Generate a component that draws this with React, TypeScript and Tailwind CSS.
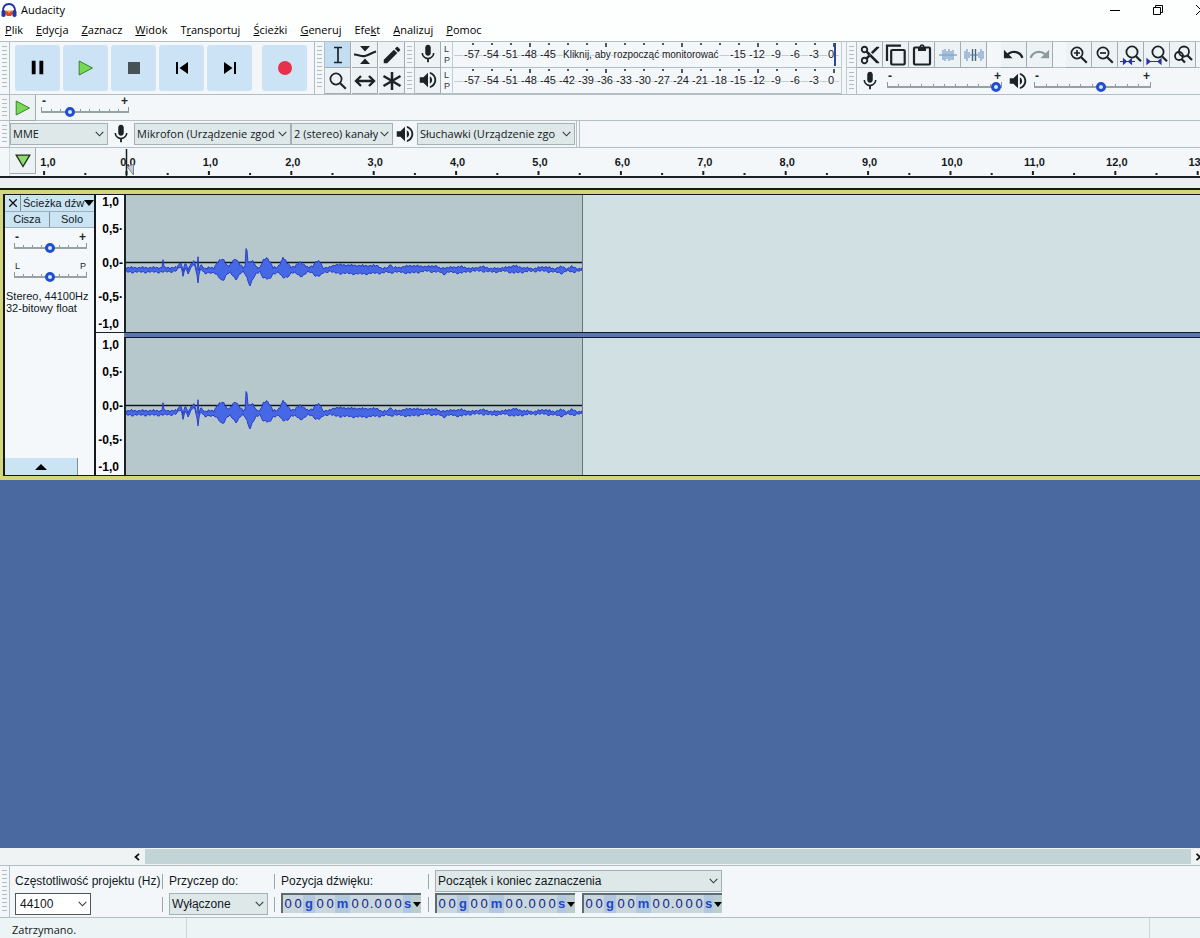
import { ReactNode } from 'react';
import {
  MdContentCut,
  MdEdit,
  MdMic,
  MdPause,
  MdSkipNext,
  MdSkipPrevious,
  MdUndo,
  MdRedo,
  MdVolumeUp,
} from 'react-icons/md';

const MENU = ['Plik', 'Edycja', 'Zaznacz', 'Widok', 'Transportuj', 'Ścieżki', 'Generuj', 'Efekt', 'Analizuj', 'Pomoc'];

// index of the underlined access key in every menu title
const ACCESS_KEY: Record<string, number> = { Transportuj: 1, Efekt: 3 };

function Gripper() {
  return (
    <div className="flex w-[10px] shrink-0 self-stretch border-r border-[#b4bfc3] py-1 pl-[2px]">
      <div className="w-[5px] bg-[repeating-linear-gradient(to_bottom,#b3bcbf_0_1px,transparent_1px_4px)]" />
    </div>
  );
}

function ToolButton({ label, active, children }: { label: string; active?: boolean; children: ReactNode }) {
  return (
    <button
      aria-label={label}
      className={`flex h-[26px] w-[26px] shrink-0 items-center justify-center border-r border-b border-[#a3adb1] text-[#1c2326] ${
        active ? 'bg-[#c3def0]' : 'bg-[#edf3f5]'
      }`}
    >
      {children}
    </button>
  );
}

function TransportButton({ label, children }: { label: string; children: ReactNode }) {
  return (
    <button
      aria-label={label}
      className="flex h-[46px] w-[45px] items-center justify-center rounded-[3px] bg-[#cbe3f5] text-black"
    >
      {children}
    </button>
  );
}

function Slider({
  label,
  value,
  ticks,
  low = '-',
  high = '+',
  className,
}: {
  label: string;
  value: number;
  ticks: number;
  low?: string;
  high?: string;
  className: string;
}) {
  return (
    <div className={`shrink-0 ${className}`}>
      <div
        className={`flex h-3 justify-between px-px leading-3 text-[#20282b] ${
          low === '-' ? 'text-[12px] font-bold' : 'text-[9px]'
        }`}
      >
        <span>{low}</span>
        <span>{high}</span>
      </div>
      <div className="grid h-[10px] items-center">
        <div className="flex h-[6px] justify-between self-start border-b-2 border-[#98a2a5] [grid-area:1/1]">
          {Array.from({ length: ticks }, (_, i) => (
            <span
              key={i}
              className={`w-px bg-[#8d979a] ${i === 0 || i === ticks - 1 ? 'h-[4px]' : 'mt-[2px] h-[2px]'}`}
            />
          ))}
        </div>
        <input
          type="range"
          aria-label={label}
          defaultValue={value}
          className="h-[10px] w-full appearance-none bg-transparent [grid-area:1/1] [&::-webkit-slider-thumb]:h-[10px] [&::-webkit-slider-thumb]:w-[10px] [&::-webkit-slider-thumb]:appearance-none [&::-webkit-slider-thumb]:rounded-full [&::-webkit-slider-thumb]:border-[3px] [&::-webkit-slider-thumb]:border-[#1f4fd0] [&::-webkit-slider-thumb]:bg-[#d8e6ff]"
        />
      </div>
    </div>
  );
}

function Select({ label, id, value, className }: { label?: string; id?: string; value: string; className: string }) {
  return (
    <div className={`grid h-[22px] shrink-0 items-center border ${className}`}>
      <select
        id={id}
        aria-label={label}
        className="h-full w-full min-w-0 appearance-none bg-transparent pr-[14px] pl-[2px] [grid-area:1/1]"
      >
        <option>{value}</option>
      </select>
      <svg className="pointer-events-none mr-[3px] h-[6px] w-[9px] justify-self-end [grid-area:1/1]" viewBox="0 0 9 6">
        <path d="M.7.9 4.5 4.8 8.3.9" fill="none" stroke="#30383b" strokeWidth="1.1" />
      </svg>
    </div>
  );
}

const METER = Array.from({ length: 20 }, (_, i) => -57 + i * 3);

function Meter({ label, hint, children }: { label: string; hint?: string; children: ReactNode }) {
  return (
    <div className="flex h-[26px] items-center border-b border-[#b4bfc3]">
      <Gripper />
      <ToolButton label={label}>{children}</ToolButton>
      <div className="w-[11px] pl-[3px] text-[9px] leading-[11px] text-[#303a3e]">
        <div>L</div>
        <div>P</div>
      </div>
      <svg className="h-[26px] w-[389px] border-l border-[#c3cdd0]">
        <path d="M1 13.5H386" stroke="#c3cdd0" />
        {METER.map((db, i) => (
          <path key={db} d={`M${20 + i * 19} 1v${i % 4 === 3 ? 4 : 2}`} stroke="#1a2023" strokeWidth="1.5" />
        ))}
        {METER.filter((db) => !hint || db < -42 || db > -18).map((db) => (
          <text
            key={db}
            x={db === 0 ? 378 : 19 + ((db + 57) / 3) * 19}
            y="16"
            textAnchor="middle"
            className="fill-[#1a2023] stroke-[#f4f7fa] stroke-2 text-[11px] [paint-order:stroke]"
          >
            {db}
          </text>
        ))}
        {hint && (
          <text x="110" y="16" className="fill-[#1a2023] stroke-[#f4f7fa] stroke-2 text-[10px] [paint-order:stroke]">
            {hint}
          </text>
        )}
        {hint && <path d="M382 1v23" stroke="#2b4795" strokeWidth="2" />}
      </svg>
    </div>
  );
}

function Loupe({ children }: { children?: ReactNode }) {
  return (
    <svg viewBox="0 0 20 20" className="h-5 w-5" fill="none" stroke="currentColor" strokeWidth="1.7">
      <circle cx="8" cy="8" r="5.6" />
      <path d="m12.2 12.2 5.6 5.6" strokeWidth="2.2" />
      {children}
    </svg>
  );
}

// loupe raised a little to leave room for the blue arrows
function FitLoupe({ children }: { children: ReactNode }) {
  return (
    <svg viewBox="0 0 22 22" className="h-[22px] w-[22px]" fill="none" stroke="currentColor" strokeWidth="1.8">
      <circle cx="12" cy="8" r="5.6" />
      <path d="m16 12.200 5 5" strokeWidth="2.200" />
      <g stroke="#2a2fae" fill="#2a2fae" strokeWidth="1.200">
        {children}
      </g>
    </svg>
  );
}

function Wave({ gap }: { gap?: boolean }) {
  return (
    <svg viewBox="0 0 20 20" className="h-5 w-5" stroke="#86a8cf" strokeWidth="1.4">
      {gap ? (
        <path d="M1 6v8M3 4v12M5 7v6M15 7v6M17 4v12M19 6v8M6 10h8" />
      ) : (
        <path d="M1 10h18M5 5v10M7 4v12M9 6v8M11 4v12M13 6v9M15 5v10" />
      )}
      {gap && <path d="M8.5 4v12M11.5 4v12" stroke="#47667f" />}
    </svg>
  );
}

function Toolbars() {
  return (
    <div className="flex h-[54px] border-t border-b border-[#b4bfc3]">
      <Gripper />
      <div className="flex w-[304px] shrink-0 items-center gap-[3px] pb-px pl-[5px]">
        <TransportButton label="Pauza">
          <MdPause size={23} />
        </TransportButton>
        <TransportButton label="Odtwórz">
          <svg viewBox="0 0 16 16" className="h-4 w-4">
            <path d="M1.2 1 14.5 8 1.2 15z" fill="#74dc52" stroke="#3f7d38" />
          </svg>
        </TransportButton>
        <TransportButton label="Zatrzymaj">
          <span className="h-3 w-3 bg-[#465256]" />
        </TransportButton>
        <TransportButton label="Do początku">
          <MdSkipPrevious size={24} />
        </TransportButton>
        <TransportButton label="Do końca">
          <MdSkipNext size={24} />
        </TransportButton>
        <div className="ml-[7px]">
          <TransportButton label="Nagraj">
            <span className="h-[14px] w-[14px] rounded-full bg-[#e8304c]" />
          </TransportButton>
        </div>
      </div>
      <div className="w-px bg-[#b4bfc3]" />
      <Gripper />
      <div className="grid shrink-0 grid-cols-3 gap-x-px">
        <ToolButton label="Zaznaczanie" active>
          <svg viewBox="0 0 16 18" className="h-[18px] w-4" fill="none" stroke="currentColor" strokeWidth="1.7">
            <path d="M4 1.5h8M4 16.5h8M8 1.5v15" />
          </svg>
        </ToolButton>
        <ToolButton label="Obwiednia">
          <svg viewBox="0 0 24 20" className="h-5 w-6" fill="currentColor">
            <path d="M7 1h10l-5 5.5zM7 19h10l-5-5.500z" />
            <path d="M1 9.500c5 0 7 2.500 11 1.500s6-3 11-4.500" fill="none" stroke="currentColor" strokeWidth="2.200" />
          </svg>
        </ToolButton>
        <ToolButton label="Rysowanie">
          <MdEdit size={22} />
        </ToolButton>
        <ToolButton label="Powiększenie">
          <Loupe />
        </ToolButton>
        <ToolButton label="Przesunięcie w czasie">
          <svg viewBox="0 0 22 16" className="h-4 w-[22px]" fill="none" stroke="currentColor" strokeWidth="2.4">
            <path d="M2 8h18M7 3 2 8l5 5M15 3l5 5-5 5" />
          </svg>
        </ToolButton>
        <ToolButton label="Multinarzędzie">
          <svg viewBox="0 0 20 20" className="h-5 w-5" stroke="currentColor" strokeWidth="2.5">
            <path d="M10 1v18M1.500 5l17 10M18.500 5l-17 10" />
          </svg>
        </ToolButton>
      </div>
      <div className="shrink-0">
        <Meter label="Poziom nagrywania" hint="Kliknij, aby rozpocząć monitorować">
          <MdMic size={22} />
        </Meter>
        <Meter label="Poziom odtwarzania">
          <MdVolumeUp size={22} />
        </Meter>
      </div>
      <div className="w-[6px] shrink-0 border-x border-[#c3cdd0]" />
      <div className="min-w-0 flex-1 overflow-hidden">
        <div className="flex h-[26px] border-b border-[#b4bfc3]">
          <Gripper />
          <ToolButton label="Wytnij">
            <MdContentCut size={22} />
          </ToolButton>
          <ToolButton label="Kopiuj">
            <svg viewBox="0 0 22 22" className="h-[22px] w-[22px]" fill="none" stroke="currentColor" strokeWidth="2.200">
              <path d="M2 17V1.600h14" />
              <rect x="6.200" y="6" width="13.500" height="14.500" rx="1" />
            </svg>
          </ToolButton>
          <ToolButton label="Wklej">
            <svg viewBox="0 0 22 22" className="h-[22px] w-[22px]" fill="none" stroke="currentColor" strokeWidth="2.200">
              <rect x="3" y="3.500" width="16" height="17" rx="1" />
              <path d="M7 3h8v4H7z" fill="currentColor" stroke="none" />
              <circle cx="11" cy="2.800" r="1.800" strokeWidth="1.400" />
            </svg>
          </ToolButton>
          <ToolButton label="Przytnij">
            <Wave />
          </ToolButton>
          <ToolButton label="Wycisz">
            <Wave gap />
          </ToolButton>
          <div className="w-[14px] shrink-0" />
          <ToolButton label="Cofnij">
            <MdUndo size={23} />
          </ToolButton>
          <ToolButton label="Ponów">
            <MdRedo size={23} className="text-[#8b9a9e]" />
          </ToolButton>
          <div className="w-[13px] shrink-0" />
          <ToolButton label="Powiększ">
            <Loupe>
              <path d="M8 5v6M5 8h6" />
            </Loupe>
          </ToolButton>
          <ToolButton label="Pomniejsz">
            <Loupe>
              <path d="M5 8h6" />
            </Loupe>
          </ToolButton>
          <ToolButton label="Dopasuj zaznaczenie">
            <FitLoupe>
              <path d="M0 17.500h15M3.500 15v5l3-2.500zM11.500 15v5l-3-2.500z" />
            </FitLoupe>
          </ToolButton>
          <ToolButton label="Dopasuj projekt">
            <FitLoupe>
              <path d="M1 17.500h14M1 15v5l3-2.500zM15 15v5l-3-2.500z" />
            </FitLoupe>
          </ToolButton>
          <ToolButton label="Przełącz powiększenie">
            <svg viewBox="0 0 20 20" className="h-5 w-5" fill="none" stroke="currentColor" strokeWidth="1.8">
              <circle cx="6" cy="11" r="4" />
              <circle cx="11" cy="6.500" r="5" />
              <path d="m8.500 14 3.500 3.500M14.500 10.500l4.500 4.500" strokeWidth="2.200" />
            </svg>
          </ToolButton>
        </div>
        <div className="flex h-[26px] items-center">
          <Gripper />
          <MdMic size={22} className="mx-[2px] shrink-0 text-[#1c2326]" />
          <Slider label="Głośność nagrywania" value={99} ticks={11} className="ml-1 w-[115px]" />
          <MdVolumeUp size={22} className="mx-[5px] shrink-0 text-[#1c2326]" />
          <Slider label="Głośność odtwarzania" value={58} ticks={11} className="w-[117px]" />
        </div>
      </div>
    </div>
  );
}

const SECOND = 82.4;

function Ruler() {
  return (
    <div className="flex h-[30px] border-b-2 border-[#1c2226]">
      <div className="w-[10px] shrink-0 border-r border-[#d3dadd]" />
      <ToolButton label="Przypnij głowicę">
        <svg viewBox="0 0 16 14" className="h-[14px] w-4">
          <path d="M1.200 1.200h13.600L8 12.500z" fill="#8fdc6c" stroke="#1f2b1d" strokeWidth="1.3" />
        </svg>
      </ToolButton>
      <svg className="h-[28px] min-w-0 flex-1">
        {Array.from({ length: 29 }, (_, i) => {
          const x = 90.5 + ((i - 2) * SECOND) / 2;
          return <path key={i} d={`M${x} 27v${i % 2 ? -2 : -4}`} stroke="#1a2023" strokeWidth="2" />;
        })}
        {Array.from({ length: 15 }, (_, i) => (
          <text
            key={i}
            x={i === 0 ? 12 : 92 + (i - 1) * SECOND}
            y="18"
            textAnchor="middle"
            className="fill-[#141a1d] text-[11px] font-bold"
          >
            {Math.abs(i - 1)},0
          </text>
        ))}
        <path d="M90.500 1v27" stroke="#1a2023" strokeWidth="1.5" />
        <path d="M97.500 16v11l-6-8z" fill="#c4cccf" stroke="#7d878a" />
      </svg>
    </div>
  );
}

// [x, height above the centre, depth below it]
const ENVELOPE = [
  [0, 2, 2], [36, 2, 2], [37, 11, 2], [38, 2, 2], [50, 2, 1], [53, 5, -2], [55, 8, -3], [57, -2, 6], [59, 7, -3],
  [62, 0, 4], [65, 6, -2], [68, 9, -6], [71, -1, 4], [72, 12, 12], [73, 0, 4], [75, 5, -1], [79, 1, 4], [84, 2, 2],
  [88, 2, 3], [91, 7, 5], [95, 10, 10], [98, 10, 9], [101, 4, 4], [104, 4, 3], [107, 9, 6], [110, 11, 9],
  [114, 5, 4], [117, 2, 2], [119, 3, 4], [120, 21, 6], [121, 21, 8], [122, 7, 11], [124, 8, 15], [127, 8, 9],
  [130, 3, 4], [134, 2, 2], [137, 9, 7], [141, 12, 9], [144, 8, 9], [147, 2, 4], [151, 2, 2], [154, 6, 4],
  [157, 12, 8], [161, 7, 7], [165, 3, 3], [169, 3, 3], [174, 8, 6], [178, 5, 5], [182, 2, 2], [187, 4, 3],
  [190, 8, 6], [194, 8, 6], [197, 2, 3], [203, 2, 1], [209, 5, 3], [236, 4, 4], [252, 4, 3], [256, 1, 3],
  [262, 2, 2], [264, 6, 3], [267, 2, 2], [272, 2, 2], [284, 4, 3], [302, 3, 1], [310, 4, 2], [314, 1, 2],
  [318, 2, 4], [322, 2, 2], [335, 3, 3], [345, 1, 1], [356, 3, 1], [366, 1, 2], [380, 2, 1], [388, 4, 3],
  [396, 2, 2], [408, 1, 1], [418, 3, 1], [428, 1, 2], [436, 3, 3], [441, 1, 1], [446, 3, 2], [452, 1, 1], [456, 1, 1],
];

function wavePath() {
  const top: string[] = [];
  const bottom: string[] = [];
  let k = 0;
  for (let x = 0; x <= 456; x++) {
    while (k < ENVELOPE.length - 2 && ENVELOPE[k + 1][0] < x) k++;
    const [x0, u0, d0] = ENVELOPE[k];
    const [x1, u1, d1] = ENVELOPE[k + 1];
    const t = (x - x0) / (x1 - x0);
    const up = u0 + (u1 - u0) * t + ((x * x * 7) % 11) * 0.25 - 1.2;
    const down = d0 + (d1 - d0) * t + ((x * x * 5) % 13) * 0.2 - 1.2;
    top.push(`${x} ${(75 - up).toFixed(1)}`);
    bottom.unshift(`${x} ${(75 + down).toFixed(1)}`);
  }
  return `M${top.join('L')}L${bottom.join('L')}Z`;
}

const WAVE = wavePath();

function Channel() {
  return (
    <div className="flex h-[137px]">
      <div className="flex w-[30px] shrink-0 flex-col border-r-2 border-[#1c2226] bg-[#f7fafc] text-right text-[12px] leading-[14px] font-bold">
        <div className="pr-[5px]">1,0</div>
        <div className="mt-[13px] pr-px">0,5·</div>
        <div className="mt-5 pr-px">0,0-</div>
        <div className="mt-5 pr-px">-0,5·</div>
        <div className="mt-auto pr-[5px] pb-px">-1,0</div>
      </div>
      <div className="flex min-w-0 flex-1 bg-[#d0e0e3]">
        <svg className="h-[137px] w-[457px] shrink-0 border-r border-[#65757a] bg-[#b6c8cb]">
          <path d="M0 67.500h457" stroke="#111619" strokeWidth="1.5" />
          <path d={WAVE} fill="#4668e4" stroke="#2439c4" strokeWidth=".9" />
        </svg>
      </div>
    </div>
  );
}

function Track() {
  return (
    <div className="border-y-4 border-l-[3px] border-[#d3d67c]">
      <div className="flex border-y-[1px] border-l-2 border-[#14191c]">
        <div className="flex w-[91px] shrink-0 flex-col border-r-2 border-[#14191c] bg-[#f5f8fb] text-[11px] text-[#11181b]">
          <div className="flex h-[17px] border-b border-[#9bb0ba] bg-[#cae4f3]">
            <button aria-label="Zamknij ścieżkę" className="flex w-4 items-center justify-center border-r border-[#7d9099]">
              <svg viewBox="0 0 8 8" className="h-2 w-2" stroke="#111" strokeWidth="1.3">
                <path d="m0 0 8 8M8 0 0 8" />
              </svg>
            </button>
            <button className="flex min-w-0 flex-1 items-center pl-[2px]">
              <span className="whitespace-nowrap">Ścieżka dźw</span>
              <svg viewBox="0 0 10 6" className="h-[6px] w-[10px] shrink-0">
                <path d="M0 0h10L5 6z" />
              </svg>
            </button>
          </div>
          <div className="flex h-4 border-b border-[#9bb0ba] bg-[#cae4f3] leading-[15px]">
            <button className="flex-1 border-r border-[#7d9099]">Cisza</button>
            <button className="flex-1">Solo</button>
          </div>
          <Slider label="Wzmocnienie" value={49} ticks={9} className="mt-[3px] ml-[9px] w-[73px]" />
          <Slider label="Panorama" value={49} ticks={9} low="L" high="P" className="mt-[7px] ml-[9px] w-[73px]" />
          <div className="mt-2 pl-px leading-[12px]">
            <div className="whitespace-nowrap">Stereo, 44100Hz</div>
            <div>32-bitowy float</div>
          </div>
          <button
            aria-label="Zwiń"
            className="mt-auto flex h-[17px] w-[73px] items-center justify-center border-r border-[#7d9099] bg-[#cae4f3]"
          >
            <svg viewBox="0 0 12 6" className="h-[6px] w-3">
              <path d="M0 6h12L6 0z" />
            </svg>
          </button>
        </div>
        <div className="min-w-0 flex-1">
          <Channel />
          <div className="flex">
            <div className="w-[28px] shrink-0 border-t border-[#1c2226] bg-[#f7fafc]" />
            <div className="h-[6px] flex-1 border-y border-[#111a2e] bg-[#5a74ac]" />
          </div>
          <Channel />
        </div>
      </div>
    </div>
  );
}

// width class and content of every cell in a time field
const TIME_CELLS = [
  ['w-[10px]', '0'],
  ['w-[10px]', '0'],
  ['w-[12px]', 'g'],
  ['w-[10px]', '0'],
  ['w-[10px]', '0'],
  ['w-[15px]', 'm'],
  ['w-[10px]', '0'],
  ['w-[10px]', '0'],
  ['w-[3px]', '.'],
  ['w-[10px]', '0'],
  ['w-[10px]', '0'],
  ['w-[10px]', '0'],
  ['w-[9px]', 's'],
];

function TimeField({ label }: { label: string }) {
  return (
    <div
      role="group"
      aria-label={label}
      className="flex h-5 w-[140px] border-t-2 border-l-2 border-[#5c6c70] bg-[#cad7dc] text-[13px] leading-[18px] text-[#101d8c]"
    >
      {TIME_CELLS.map(([width, char], i) => (
        <span
          key={i}
          className={`flex shrink-0 justify-center ${width} ${
            /[gms]/.test(char) ? 'bg-[#b2c8dc] font-bold text-[#2446c4]' : ''
          }`}
        >
          {char}
        </span>
      ))}
      <button aria-label={`Format: ${label}`} className="flex min-w-0 flex-1 items-center justify-center bg-[#bccdd0]">
        <svg viewBox="0 0 8 5" className="h-[5px] w-2">
          <path d="M0 0h8L4 5z" />
        </svg>
      </button>
    </div>
  );
}

function Divider() {
  return (
    <div className="flex w-[13px] shrink-0 flex-col items-center gap-2 pt-1">
      <div className="h-[15px] w-px bg-[#9aa6a9]" />
      <div className="h-[15px] w-px bg-[#9aa6a9]" />
    </div>
  );
}

function SelectionBar() {
  return (
    <div className="flex h-[53px] border-t border-b border-[#b4bfc3] text-[12px] text-[#12191c]">
      <Gripper />
      <div className="flex pt-1 pl-[5px]">
        <div className="w-[141px]">
          <label htmlFor="rate" className="block h-[23px] leading-[23px] whitespace-nowrap">
            Częstotliwość projektu (Hz)
          </label>
          <Select id="rate" value="44100" className="w-[76px] border-[#4e585b] bg-white pl-[2px]" />
        </div>
        <Divider />
        <div className="w-[99px]">
          <label htmlFor="snap" className="block h-[23px] leading-[23px]">
            Przyczep do:
          </label>
          <Select id="snap" value="Wyłączone" className="w-[99px] border-[#a4b1b4] bg-[#dfe8e9]" />
        </div>
        <Divider />
        <div className="w-[141px]">
          <div className="h-[23px] leading-[23px]">Pozycja dźwięku:</div>
          <TimeField label="Pozycja dźwięku" />
        </div>
        <Divider />
        <div className="w-[287px]">
          <Select
            label="Tryb zaznaczenia"
            value="Początek i koniec zaznaczenia"
            className="mb-px border-[#a4b1b4] bg-[#dfe8e9]"
          />
          <div className="flex justify-between">
            <TimeField label="Początek zaznaczenia" />
            <TimeField label="Koniec zaznaczenia" />
          </div>
        </div>
      </div>
    </div>
  );
}

export default function App() {
  return (
    <div className="flex min-h-screen flex-col overflow-hidden bg-[#f4f7fa] font-['Liberation_Sans',Arial,sans-serif] text-black">
      <header className="bg-[#fdfffe] font-['Open_Sans','Noto_Sans',sans-serif] text-[11px]">
        <div className="flex h-5 items-center pl-px">
          <svg viewBox="0 0 16 16" className="h-4 w-4">
            <path d="M4 8.500h8v4H4z" fill="#f59a3a" />
            <path d="M4 11.500 6 9l2 2.500L10 9l2 2.500L10 14H6z" fill="#e2452c" />
            <path d="M2 10C1.500 4.500 4.500 2 8 2s6.500 2.500 6 8" fill="none" stroke="#2334a8" strokeWidth="2" />
            <rect x=".5" y="8" width="4" height="7" rx="1.8" fill="#2334a8" />
            <rect x="11.500" y="8" width="4" height="7" rx="1.8" fill="#2334a8" />
          </svg>
          <span className="ml-1">Audacity</span>
          <div className="-mr-[22px] ml-auto flex">
            <button aria-label="Minimalizuj" className="flex h-[18px] w-[43px] items-center justify-center">
              <span className="h-px w-[10px] bg-black" />
            </button>
            <button aria-label="Przywróć" className="flex h-[18px] w-[43px] items-center justify-center">
              <svg viewBox="0 0 10 10" className="h-[10px] w-[10px]" fill="none" stroke="#000">
                <path d="M.5 2.500h7v7h-7zM2.500 2.500v-2h7v7h-2" />
              </svg>
            </button>
            <button aria-label="Zamknij" className="flex h-[18px] w-[43px] items-center justify-center">
              <svg viewBox="0 0 10 10" className="h-[10px] w-[10px]" stroke="#000">
                <path d="m0 0 10 10M10 0 0 10" />
              </svg>
            </button>
          </div>
        </div>
        <nav className="flex h-[21px] items-center gap-[13px] pl-[5px]">
          {MENU.map((name) => {
            const key = ACCESS_KEY[name] ?? 0;
            return (
              <button key={name}>
                {name.slice(0, key)}
                <u>{name[key]}</u>
                {name.slice(key + 1)}
              </button>
            );
          })}
        </nav>
      </header>

      <Toolbars />

      <div className="flex h-[26px] border-b border-[#b4bfc3]">
        <Gripper />
        <ToolButton label="Odtwórz z prędkością">
          <svg viewBox="0 0 16 16" className="h-4 w-4">
            <path d="M1.2 1 14.5 8 1.2 15z" fill="#74dc52" stroke="#3f7d38" />
          </svg>
        </ToolButton>
        <Slider label="Prędkość odtwarzania" value={31} ticks={10} className="ml-[5px] w-[88px]" />
      </div>

      <div className="flex h-[27px] items-center border-b border-[#b4bfc3] font-['Open_Sans','Noto_Sans',sans-serif] text-[11px] text-[#12191c]">
        <Gripper />
        <Select label="Host audio" value="MME" className="w-[98px] border-[#a4b1b4] bg-[#dfe8e9]" />
        <MdMic size={22} className="mx-[2px] shrink-0 text-[#1c2326]" />
        <Select
          label="Urządzenie nagrywające"
          value="Mikrofon (Urządzenie zgod"
          className="w-[157px] border-[#a4b1b4] bg-[#dfe8e9]"
        />
        <Select label="Kanały nagrywania" value="2 (stereo) kanały" className="w-[102px] border-[#a4b1b4] bg-[#dfe8e9]" />
        <MdVolumeUp size={22} className="mx-[1px] shrink-0 text-[#1c2326]" />
        <Select
          label="Urządzenie odtwarzające"
          value="Słuchawki (Urządzenie zgo"
          className="w-[158px] border-[#a4b1b4] bg-[#dfe8e9]"
        />
        <div className="ml-px w-1 self-stretch border-x border-[#b4bfc3]" />
      </div>

      <Ruler />

      <main className="flex flex-1 flex-col bg-[#4a69a0]">
        <div className="h-3 border-b-2 border-[#14191c] bg-[#e8eef1]" />
        <Track />
      </main>

      <div className="flex h-[17px] items-center bg-[#eff3f4]">
        <button aria-label="Przewiń w lewo" className="flex w-[145px] justify-end pr-[5px]">
          <svg viewBox="0 0 6 8" className="h-2 w-[6px]" fill="none" stroke="#111" strokeWidth="1.8">
            <path d="M5 .8 1.500 4 5 7.200" />
          </svg>
        </button>
        <div className="h-[15px] flex-1 bg-[#c2d4d5]" />
        <button aria-label="Przewiń w prawo" className="flex w-[9px] justify-end">
          <svg viewBox="0 0 4 8" className="h-2 w-1" fill="none" stroke="#111" strokeWidth="1.8">
            <path d="M.5.8 4 4 .5 7.200" />
          </svg>
        </button>
      </div>

      <SelectionBar />

      <footer className="flex h-5 bg-[#edf4f5] font-['Open_Sans','Noto_Sans',sans-serif] text-[11px] leading-6 text-[#12191c]">
        <div className="w-[187px] border-r border-[#cbd6d8] pl-3">Zatrzymano.</div>
        <div className="mr-[50px] flex-1 border-r border-[#cbd6d8]" />
      </footer>
    </div>
  );
}
